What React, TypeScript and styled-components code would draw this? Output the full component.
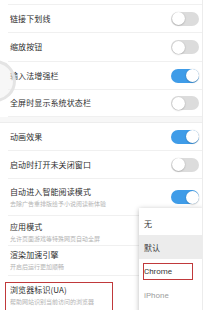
import styled, { createGlobalStyle } from "styled-components";

const GlobalStyle = createGlobalStyle`
  html, body {
    margin: 0;
    padding: 0;
    background: #ffffff;
  }
  body {
    width: 210px;
    height: 310px;
    overflow: hidden;
    font-family: "Noto Sans CJK SC", "Noto Sans", sans-serif;
  }
`;

const Screen = styled.div`
  position: relative;
  width: 202px;
  height: 310px;
  overflow: hidden;
  border-right: 1px solid #ececec;
  background: #fff;
`;

const TopStub = styled.div`
  height: 4px;
  border-bottom: 1px solid #f0f0f0;
  margin-left: 8px;
`;

const Row = styled.div<{ $h: number; $pt?: number }>`
  height: ${(p) => p.$h}px;
  box-sizing: border-box;
  margin-left: 8px;
  padding: ${(p) => (p.$pt !== undefined ? `${p.$pt}px 0 0 2px` : "0 0 0 2px")};
  display: flex;
  align-items: ${(p) => (p.$pt !== undefined ? "flex-start" : "center")};
  justify-content: space-between;
  border-bottom: 1px solid #f0f0f0;
  position: relative;
`;

const SectionGap = styled.div`
  height: 5px;
  background: #f7f7f7;
  border-bottom: 1px solid #ededed;
`;

const TextBlock = styled.div`
  display: flex;
  flex-direction: column;
  gap: 3px;
`;

const Title = styled.span`
  font-size: 8px;
  line-height: 10px;
  color: #2e2e2e;
  letter-spacing: 0.1px;
`;

const Sub = styled.span`
  font-size: 6px;
  line-height: 8px;
  color: #b4b4b4;
`;

const Track = styled.div<{ $on: boolean }>`
  width: 28px;
  height: 14px;
  border-radius: 7px;
  margin-right: 3px;
  background: ${(p) => (p.$on ? "#3f9ce8" : "#dcdcdc")};
  position: relative;
  flex-shrink: 0;
`;

const Knob = styled.div<{ $on: boolean }>`
  position: absolute;
  top: 0.5px;
  ${(p) => (p.$on ? "right: 0.5px;" : "left: 0.5px;")}
  width: 13px;
  height: 13px;
  border-radius: 50%;
  background: #fff;
  box-shadow: 0 0.5px 1.5px rgba(0, 0, 0, 0.3);
`;

const FloatRing = styled.div`
  position: absolute;
  left: -26px;
  top: 60px;
  width: 36px;
  height: 36px;
  border-radius: 50%;
  border: 3px solid #e4e4e4;
  background: rgba(240, 240, 240, 0.5);
`;

const Menu = styled.div`
  position: absolute;
  left: 139px;
  top: 208px;
  width: 64px;
  height: 110px;
  padding-top: 3px;
  box-sizing: border-box;
  background: #fff;
  box-shadow: 0 1px 5px rgba(0, 0, 0, 0.28);
`;

const MenuItem = styled.div<{ $active?: boolean; $faded?: boolean }>`
  position: relative;
  height: 24px;
  display: flex;
  align-items: center;
  padding-left: 5px;
  font-family: Roboto, "Noto Sans CJK SC", sans-serif;
  font-size: 8px;
  color: ${(p) => (p.$faded ? "#a0a0a0" : "#3a3a3a")};
  background: ${(p) => (p.$active ? "#ececec" : "transparent")};
`;

const Mark = styled.div<{ $l: number; $t: number; $w: number; $h: number }>`
  position: absolute;
  left: ${(p) => p.$l}px;
  top: ${(p) => p.$t}px;
  width: ${(p) => p.$w}px;
  height: ${(p) => p.$h}px;
  border: 1.5px solid #c0393b;
  box-sizing: border-box;
  pointer-events: none;
`;

type Item = { title: string; sub?: string; on?: boolean; h: number; pt?: number };

const groupA: Item[] = [
  { title: "链接下划线", on: false, h: 28 },
  { title: "缩放按钮", on: false, h: 29 },
  { title: "输入法增强栏", on: true, h: 28 },
  { title: "全屏时显示系统状态栏", on: false, h: 27 },
];

const groupB: Item[] = [
  { title: "动画效果", on: true, h: 28 },
  { title: "启动时打开未关闭窗口", on: false, h: 28 },
  { title: "自动进入智能阅读模式", sub: "去除广告重排版给予小说阅读新体验", on: true, h: 37 },
  { title: "应用模式", sub: "允许页面游戏等特殊网页自动全屏", h: 30, pt: 6 },
  { title: "渲染加速引擎", sub: "开启后运行更加顺畅", h: 30, pt: 4 },
];

function SettingRow({ item, children }: { item: Item; children?: React.ReactNode }) {
  return (
    <Row $h={item.h} $pt={item.pt}>
      <TextBlock>
        <Title>{item.title}</Title>
        {item.sub && <Sub>{item.sub}</Sub>}
      </TextBlock>
      {item.on !== undefined && (
        <Track $on={item.on}>
          <Knob $on={item.on} />
        </Track>
      )}
      {children}
    </Row>
  );
}

export default function App() {
  return (
    <>
      <GlobalStyle />
      <Screen>
        <TopStub />
        {groupA.map((it) => (
          <SettingRow key={it.title} item={it} />
        ))}
        <SectionGap />
        {groupB.map((it) => (
          <SettingRow key={it.title} item={it} />
        ))}
        <SettingRow item={{ title: "浏览器标识(UA)", sub: "帮助网站识别当前访问的浏览器", h: 40, pt: 9 }}>
          <Mark $l={-3} $t={6} $w={108} $h={40} />
        </SettingRow>
        <FloatRing />
        <Menu>
          <MenuItem>无</MenuItem>
          <MenuItem $active>默认</MenuItem>
          <MenuItem>
            Chrome
            <Mark $l={4} $t={4} $w={50} $h={17} />
          </MenuItem>
          <MenuItem $faded>iPhone</MenuItem>
        </Menu>
      </Screen>
    </>
  );
}
